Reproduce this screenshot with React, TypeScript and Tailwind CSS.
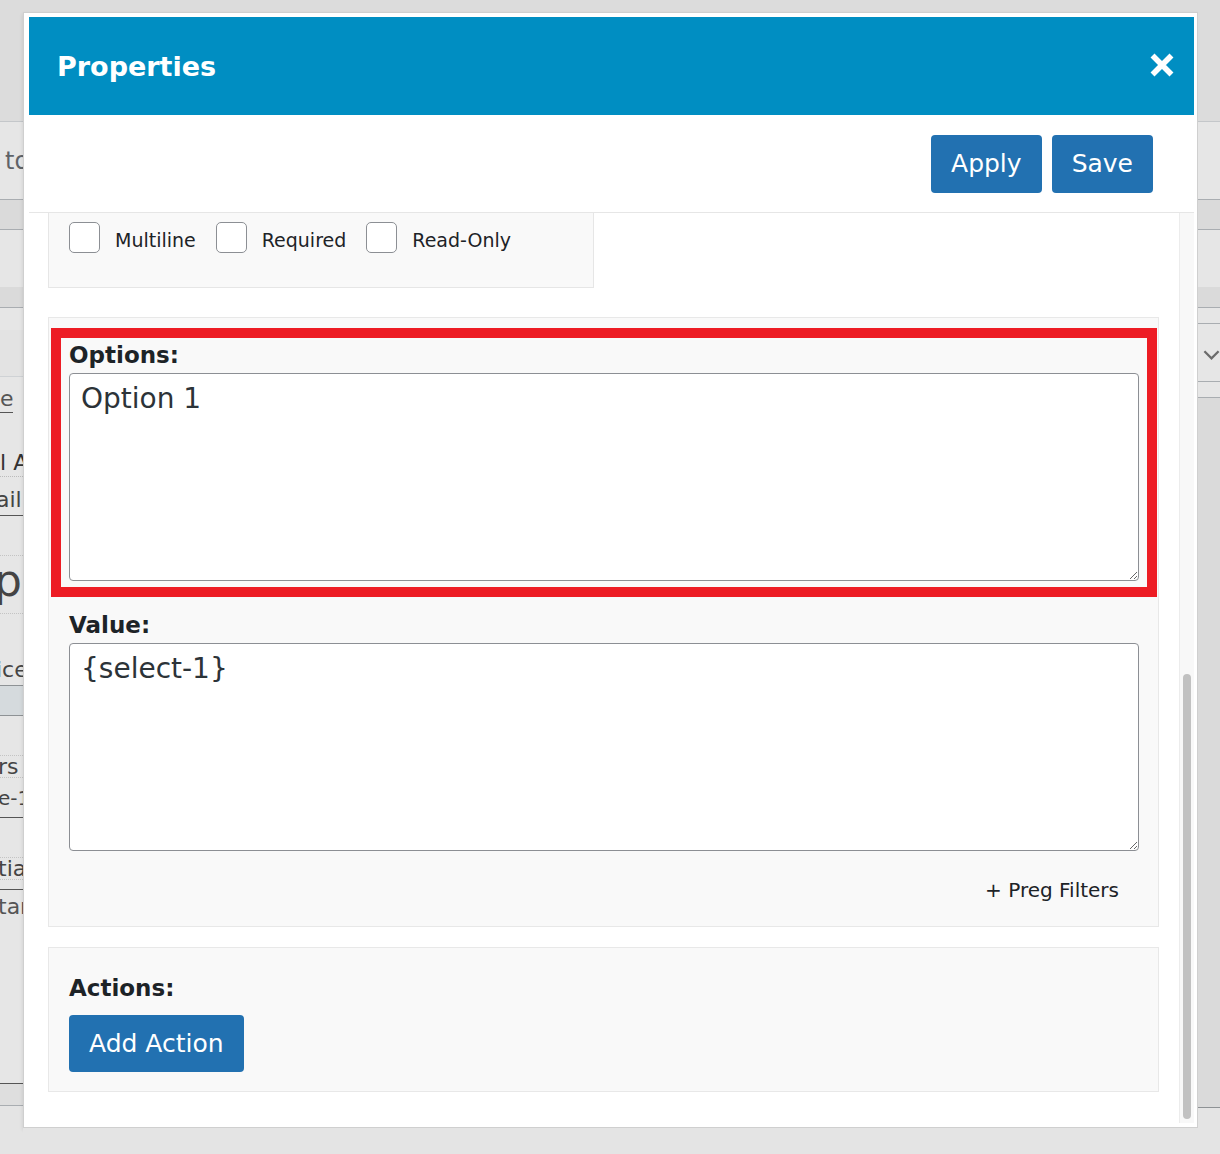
import React from "react";

function LeftStrip() {
  return (
    <div className="w-[23px] shrink-0 flex flex-col overflow-hidden text-[#5f6368] whitespace-nowrap">
      <div className="h-[122px] bg-[#dcdcdc] border-b border-[#c4c7ca]" />
      <div className="h-[78px] bg-[#e6e6e6] border-b border-[#a9adb1] flex items-center pl-[5px] text-[24px] leading-none">to</div>
      <div className="h-[30px] bg-[#dadada] border-b border-[#a9adb1]" />
      <div className="h-[57px] bg-[#e6e6e6]" />
      <div className="h-[21px] bg-[#dadada] border-b border-[#a9adb1]" />
      <div className="h-[22px] bg-[#e6e6e6]" />
      <div className="h-[47px] bg-[#e3e3e3] border-b border-[#cfd2d5]" />
      <div className="h-[36px] bg-[#e6e6e6] flex items-end">
        <div className="-ml-[14px] text-[22px] leading-[24px] text-[#555] border-b border-[#555] pb-[1px]">ne</div>
      </div>
      <div className="h-[64px] bg-[#e6e6e6] flex flex-col justify-end">
        <div className="-ml-[6px] text-[22px] leading-[26px] text-[#333] border-b border-dotted border-[#bbb]">il A</div>
      </div>
      <div className="h-[39px] bg-[#e6e6e6] flex flex-col justify-end">
        <div className="-ml-[4px] text-[22px] leading-[30px] text-[#444] border-b border-[#555]">ail</div>
      </div>
      <div className="h-[40px] bg-[#e6e6e6] border-b border-dotted border-[#c4c4c4]" />
      <div className="h-[58px] bg-[#e6e6e6] border-b border-dotted border-[#c4c4c4] overflow-hidden">
        <div className="-ml-[6px] text-[44px] leading-[50px] text-[#444]">p</div>
      </div>
      <div className="h-[72px] bg-[#e6e6e6] border-b border-[#8e9295] flex items-end">
        <div className="-ml-[4px] text-[22px] leading-[30px] text-[#444]">ice</div>
      </div>
      <div className="h-[30px] bg-[#d5dadd] border-b border-[#8e9295]" />
      <div className="h-[40px] bg-[#e6e6e6] border-b border-dotted border-[#c4c4c4]" />
      <div className="h-[22px] bg-[#e6e6e6] border-b border-dotted border-[#c4c4c4] flex items-center">
        <div className="-ml-[2px] text-[22px] leading-[22px] text-[#444]">rs</div>
      </div>
      <div className="h-[40px] bg-[#e6e6e6] border-b border-[#555] flex items-center">
        <div className="-ml-[2px] text-[20px] leading-[22px] text-[#444]">e-1</div>
      </div>
      <div className="h-[40px] bg-[#e6e6e6] border-b border-dotted border-[#c4c4c4]" />
      <div className="h-[22px] bg-[#e6e6e6] border-b border-dotted border-[#c4c4c4] flex items-center">
        <div className="-ml-[2px] text-[22px] leading-[22px] text-[#444]">tia</div>
      </div>
      <div className="h-[10px] bg-[#e6e6e6] border-b border-[#555]" />
      <div className="h-[194px] bg-[#e6e6e6] border-b border-[#555]">
        <div className="-ml-[2px] text-[22px] leading-[34px] text-[#555]">tar</div>
      </div>
      <div className="h-[22px] bg-[#dedede] border-b border-[#a9adb1]" />
      <div className="flex-1 bg-[#e4e4e4]" />
    </div>
  );
}

function RightStrip() {
  return (
    <div className="w-[22px] shrink-0 flex flex-col overflow-hidden">
      <div className="h-[122px] bg-[#dcdcdc] border-b border-[#c4c7ca]" />
      <div className="h-[78px] bg-[#e6e6e6] border-b border-[#a9adb1]" />
      <div className="h-[30px] bg-[#dadada] border-b border-[#a9adb1]" />
      <div className="h-[57px] bg-[#e6e6e6]" />
      <div className="h-[21px] bg-[#dadada] border-b border-[#a9adb1]" />
      <div className="h-[16px] bg-[#e6e6e6] border-b border-[#a9adb1]" />
      <div className="h-[58px] bg-[#e6e6e6] border-b border-[#a9adb1] flex items-center pl-[5px] pt-[4px]">
        <svg width="18" height="12" viewBox="0 0 18 12">
          <path d="M1.5 2 L9 9.5 L16.5 2" fill="none" stroke="#6b6b6b" strokeWidth="2.4" />
        </svg>
      </div>
      <div className="h-[16px] bg-[#e6e6e6] border-b border-[#a9adb1]" />
      <div className="h-[710px] bg-[#dadada] border-b border-[#8e9295]" />
      <div className="flex-1 bg-[#e4e4e4]" />
    </div>
  );
}

function Checkbox({ label }: { label: string }) {
  return (
    <div className="flex items-center">
      <div className="w-[31px] h-[31px] rounded-[5px] border border-[#8c8f94] bg-white" />
      <span className="ml-[15px] pt-[5px] text-[19px] leading-[26px] text-[#1d2327]">{label}</span>
    </div>
  );
}

function Field({ label, value, first }: { label: string; value: string; first?: boolean }) {
  return (
    <div className={first ? "" : "mt-[30px]"}>
      <div className="text-[23px] leading-[28px] font-bold text-[#1d2327]">{label}</div>
      <textarea
        readOnly
        defaultValue={value}
        className="mt-[4px] block w-full h-[208px] bg-white border border-[#8c8f94] rounded-[4px] pt-[6px] px-[11px] text-[28px] leading-[38px] text-[#2c3338] font-['DejaVu_Sans',sans-serif] outline-none resize"
      />
    </div>
  );
}

export default function App() {
  return (
    <div className="w-[1220px] h-[1154px] flex overflow-hidden bg-[#e4e4e4] font-['DejaVu_Sans',sans-serif]">
      <LeftStrip />
      <div className="w-[1175px] shrink-0 flex flex-col">
        <div className="h-[12px] bg-[#dcdcdc]" />
        <div className="h-[1116px] bg-white border border-[#cfcfcf] shadow-[0_2px_4px_rgba(0,0,0,0.12)] pl-[5px] pr-[3px] pt-[4px] pb-[4px] flex flex-col">
          <div className="h-[98px] shrink-0 bg-[#008ec2] flex items-center justify-between pl-[28px] pr-[20px]">
            <h1 className="text-[27px] leading-none font-bold text-white">Properties</h1>
            <svg width="24" height="24" viewBox="0 0 24 24" className="mt-[-2px]">
              <path d="M4.5 4.5 L19.5 19.5 M19.5 4.5 L4.5 19.5" stroke="white" strokeWidth="5.6" strokeLinecap="square" />
            </svg>
          </div>
          <div className="h-[98px] shrink-0 flex items-center justify-end gap-[10px] pr-[41px] border-b border-[#e6e6e6]">
            <button className="h-[58px] px-[20px] rounded-[4px] bg-[#2271b1] text-white text-[25px] leading-none">Apply</button>
            <button className="h-[58px] px-[20px] rounded-[4px] bg-[#2271b1] text-white text-[25px] leading-none">Save</button>
          </div>
          <div className="flex-1 flex overflow-hidden">
            <div className="flex-1 pl-[19px] pr-[20px] flex flex-col">
              <div className="w-[546px] bg-[#f9f9f9] border-x border-b border-[#e6e6e6] pt-[9px] pb-[34px] pl-[20px] flex gap-[20px]">
                <Checkbox label="Multiline" />
                <Checkbox label="Required" />
                <Checkbox label="Read-Only" />
              </div>

              <div className="relative mt-[29px] bg-[#f9f9f9] border border-[#e8e8e8] pt-[23px] pl-[20px] pr-[19px] pb-[22px]">
                <Field label="Options:" value="Option 1" first />
                <Field label="Value:" value="{select-1}" />
                <div className="mt-[26px] flex justify-end pr-[20px] text-[20px] leading-[27px] text-[#1d2327]">+ Preg Filters</div>
                <div className="absolute left-[2px] top-[10px] w-[1106px] h-[269px] border-[10px] border-[#ed1c24] pointer-events-none" />
              </div>

              <div className="mt-[20px] bg-[#f9f9f9] border border-[#e8e8e8] pt-[26px] pl-[20px] pb-[19px]">
                <div className="text-[23px] leading-[28px] font-bold text-[#1d2327]">Actions:</div>
                <button className="mt-[13px] h-[57px] px-[20px] rounded-[4px] bg-[#2271b1] text-white text-[25px] leading-none">Add Action</button>
              </div>
            </div>
            <div className="w-[15px] shrink-0 bg-[#f8f8f8] border-l border-[#ececec] flex flex-col pl-[3px] pr-[3px] pb-[4px]">
              <div className="mt-[461px] flex-1 w-[8px] rounded-full bg-[#c1c1c1]" />
            </div>
          </div>
        </div>
        <div className="flex-1 bg-[#e4e4e4]" />
      </div>
      <RightStrip />
    </div>
  );
}
